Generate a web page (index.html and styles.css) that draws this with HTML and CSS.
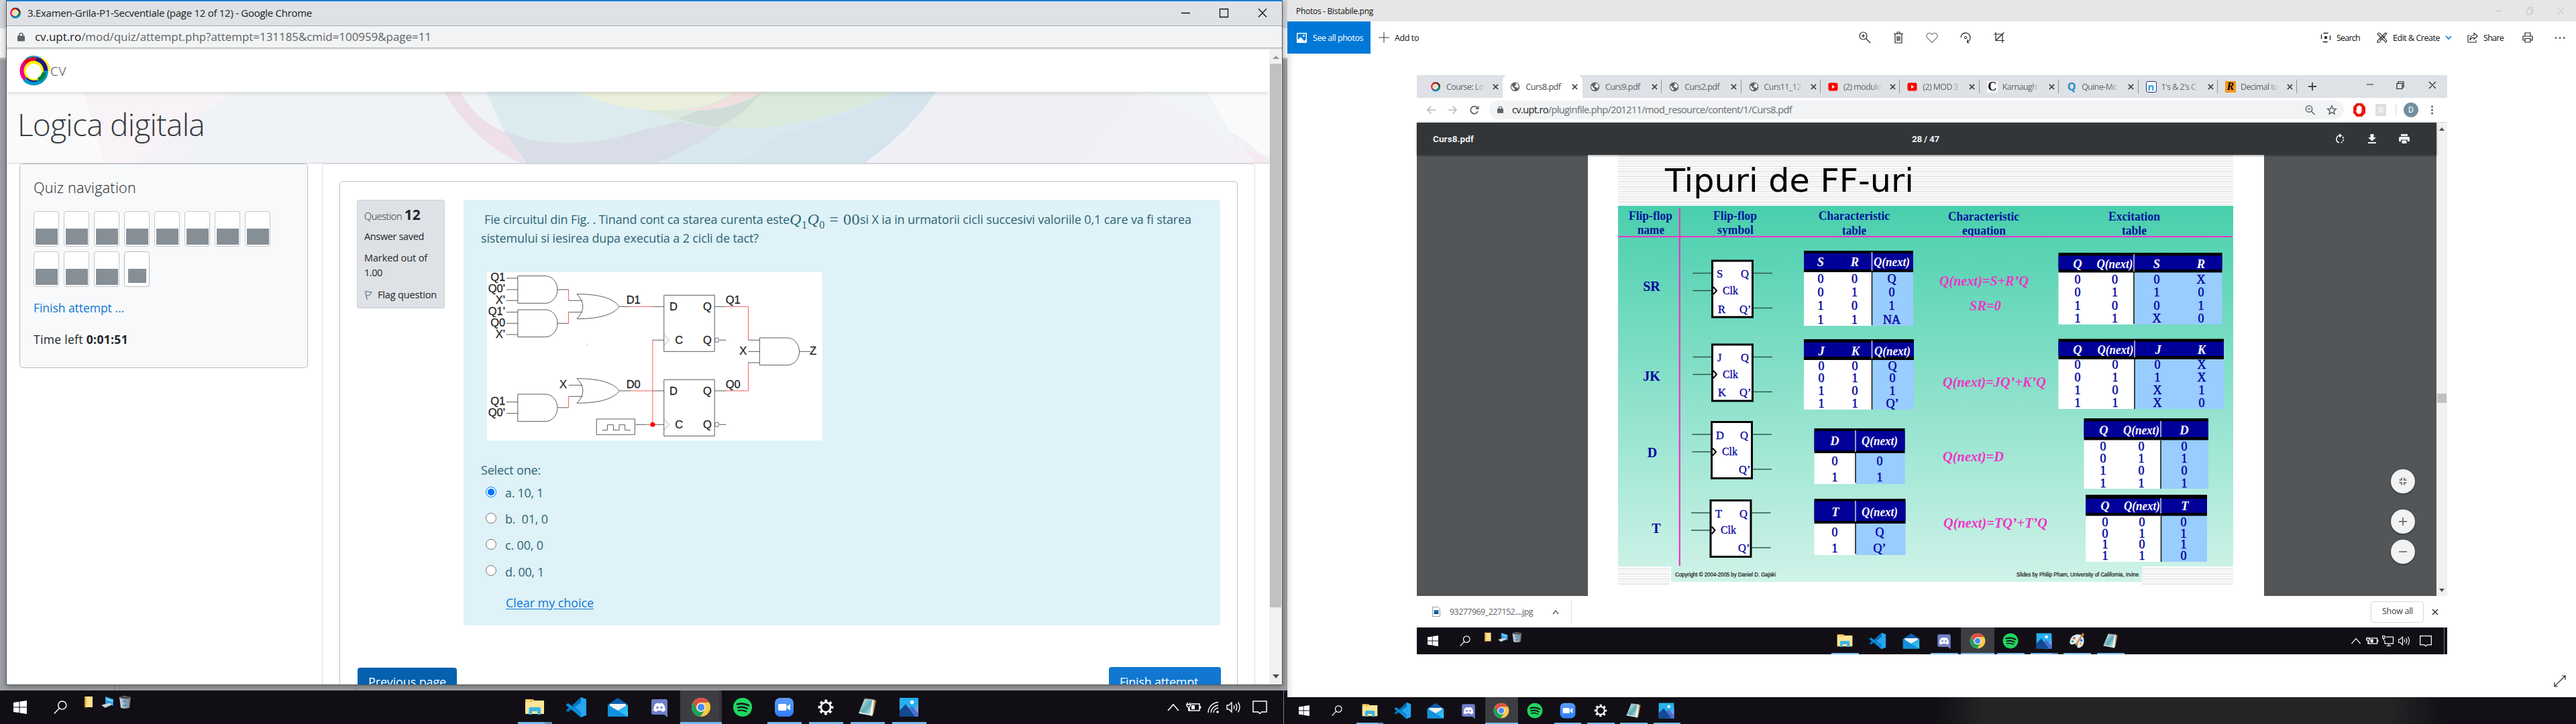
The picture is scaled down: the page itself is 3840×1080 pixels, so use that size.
FILE: index.html
```html
<!DOCTYPE html>
<html lang="en">
<head>
<meta charset="utf-8">
<title>Desktop</title>
<link rel="stylesheet" href="styles.css">
</head>
<body>
<svg class="defs" aria-hidden="true">
  <defs>
    <linearGradient id="gMail" x1="0" y1="0" x2="1" y2="1"><stop offset="0" stop-color="#1b8fe0"/><stop offset="1" stop-color="#35d0f8"/></linearGradient>
    <linearGradient id="gZoom" x1="0" y1="0" x2="0" y2="1"><stop offset="0" stop-color="#5b9df9"/><stop offset="1" stop-color="#2f7df6"/></linearGradient>
    <linearGradient id="gNote" x1="0" y1="0" x2="1" y2="1"><stop offset="0" stop-color="#e3f3f5"/><stop offset=".55" stop-color="#5fa9b5"/><stop offset="1" stop-color="#d5eef0"/></linearGradient>
    <linearGradient id="gBin" x1="0" x2="1"><stop offset="0" stop-color="#d7dadd"/><stop offset="1" stop-color="#73787d"/></linearGradient>
    <linearGradient id="gSlide" x1="0" y1="0" x2="0" y2="1"><stop offset="0" stop-color="#49cfad"/><stop offset="1" stop-color="#d0f3e9"/></linearGradient>
    <pattern id="stripes" width="20" height="7.6" patternUnits="userSpaceOnUse" y="231"><rect width="20" height="7.6" fill="#fdfdfd"/><rect y="1" width="20" height="1.6" fill="#e2e2e2"/><rect y="4.8" width="20" height="1.3" fill="#eaeaea"/></pattern>
  </defs>
  <symbol id="win" viewBox="0 0 20 20"><path fill="#fff" d="M0 3l8.500-1.200V9.500H0zM9.500 1.600 20 0v9.500H9.500zM0 10.500h8.500v7.700L0 17zM9.500 10.500H20V20l-10.500-1.600z"/></symbol>
  <symbol id="search" viewBox="0 0 20 20"><g fill="none" stroke="#fff" stroke-width="1.500"><circle cx="12.800" cy="7" r="6"/><path d="M8.500 11.500.8 19.400"/></g></symbol>
  <symbol id="minis" viewBox="0 0 70 20">
    <path fill="#ffe08a" d="M0 1h12v16H2l-2-2z"/><path fill="#d8a63f" d="M0 1h2.500v18L0 16z"/>
    <path fill="#2b9be8" d="M31 1l12 4v10l-12-4z"/><path fill="#7fd0ff" d="M32 3l10 3.300v3L32 6z"/><path fill="#c5d3dc" d="M25 14l9-3 6 2-9 5zM33 12.500l5-2 3 2-4 3z"/>
    <path fill="url(#gBin)" d="M52 2l8-2 9 2-2 16-7 1-6-1z"/><ellipse cx="60.500" cy="2.500" rx="8" ry="2" fill="#4b5055"/><path d="M57 9l3-2 2 3m0 2-2 3-3-1" fill="none" stroke="#1e8fe0" stroke-width="1.800"/>
  </symbol>
  <symbol id="explorer" viewBox="0 0 32 32"><path fill="#f6b93b" d="M2 4h12l2 3h-3l-3 2H2z"/><path fill="#ffe596" d="M2 8h9l3-2h16v20H2z"/><path fill="#fff" d="M4 5.500h5v1.400H4z"/><path fill="#3cb4e7" d="M7.500 27V18q0-2 2-2H23q2 0 2 2v9h-5v-5h-8v5z"/></symbol>
  <symbol id="vscode" viewBox="0 0 32 32"><path fill="#0072b9" d="M23 1 9 14 4 10 1 12v1l4 3.500L1 20v1l3 2 5-4 14 12z"/><path fill="#0d8ad6" d="M1 12l3-2 20 15v6h-1L1 13z"/><path fill="#27a5f2" d="M23 1l8 3v24l-8 3V9l-9.500 7 9.500 7.500z"/></symbol>
  <symbol id="mail" viewBox="0 0 32 32"><path fill="#0b5cad" d="M1 12 16 2l15 10v6H1z"/><path fill="#f2f2f4" d="M4 11h24v4L16 22 4 15z"/><path fill="url(#gMail)" d="M1 12l15 9 15-9v18H1z"/><path fill="#1390dd" d="M1 30V13l30 17z"/></symbol>
  <symbol id="discord" viewBox="0 0 32 32"><path fill="#6f7fc9" d="M7 4h18q3 0 3 3v24l-5-4H7q-3 0-3-3V7q0-3 3-3z"/><path fill="#fff" d="M9.500 11.500q2.500-2 5-2l.5 1h2l.5-1q2.500 0 5 2 2.500 5 2.500 9-2 2.200-5 2.200l-1-1.500q2-.4 2.500-1.200-6 2.400-11 0 .8.900 2.500 1.200l-1 1.500q-3 0-5-2.200 0-4 2.500-9z"/><circle cx="13" cy="16.500" r="1.700" fill="#6f7fc9"/><circle cx="19" cy="16.500" r="1.700" fill="#6f7fc9"/></symbol>
  <symbol id="chrome" viewBox="0 0 32 32"><circle cx="16" cy="16" r="14" fill="#fdca45"/><path fill="#dd4f43" d="M3.900 9A14 14 0 0 1 28.100 9H16a7 7 0 0 0-6.100 10.500z"/><path fill="#1aa260" d="M3.900 9A14 14 0 0 0 15 30l7-10.500a7 7 0 0 1-12.100 0z"/><circle cx="16" cy="16" r="6.600" fill="#f4f4f4"/><circle cx="16" cy="16" r="5.200" fill="#4a8af5"/></symbol>
  <symbol id="spotify" viewBox="0 0 32 32"><circle cx="16" cy="16" r="14" fill="#1ed760"/><g fill="none" stroke="#17181a" stroke-linecap="round"><path stroke-width="2.800" d="M8 11.500q9-2.500 17 1.800"/><path stroke-width="2.400" d="M9 16.500q7.500-2.200 14 1.500"/><path stroke-width="2" d="M9.500 21q6.500-1.700 12 1.300"/></g></symbol>
  <symbol id="zoomapp" viewBox="0 0 32 32"><rect x="2" y="2" width="28" height="28" rx="8" fill="url(#gZoom)"/><rect x="7" y="11" width="12.500" height="10" rx="2" fill="#fff"/><path fill="#fff" d="M20.500 14.500 25 11.200v9.600l-4.500-3.300z"/></symbol>
  <symbol id="gear" viewBox="0 0 32 32"><circle cx="16" cy="16" r="7.200" fill="none" stroke="#fff" stroke-width="2.600"/><circle cx="16" cy="16" r="9.700" fill="none" stroke="#fff" stroke-width="3.400" stroke-dasharray="3.800 3.820" stroke-dashoffset="1.900"/></symbol>
  <symbol id="notepad" viewBox="0 0 32 32"><path fill="#b98c4e" d="M25 4l4 2-4 20-4 4z"/><path fill="#e9f4f5" d="M12 3l14 1.500L23.500 29 3 25z"/><path fill="url(#gNote)" d="M11.500 4.500 23 6l-3.500 21L4 23z"/><path d="M11.500 3.500 26 5" stroke="#6d7476" stroke-width="2" stroke-dasharray="1.500 1"/></symbol>
  <symbol id="photos" viewBox="0 0 32 32"><path fill="#27b0ee" d="M2 2h28v28H2z"/><path fill="#7ba0ea" d="M30 10v20H20z"/><path fill="#4c6fd0" d="M15 19l5-5 10 11v5H15z"/><path fill="#134a92" d="M2 21l9-9.500L25 30H2z"/><circle cx="20.500" cy="8.500" r="2.800" fill="#fff"/></symbol>
  <symbol id="paint" viewBox="0 0 32 32"><path fill="#dcecf6" d="M17 4q12 0 12 12 0 10-9 13-5 0-3-6 1-4-4-2-8 4-10-1Q3 6 17 4z"/><circle cx="11" cy="11" r="2.300" fill="#e8503d"/><circle cx="8" cy="17" r="2.200" fill="#3ba54f"/><circle cx="24" cy="15" r="2.300" fill="#2f86dd"/><circle cx="23" cy="21" r="2.200" fill="#f3b732"/><path d="M27 3 14 24" stroke="#d58a3a" stroke-width="3"/><path d="M26 1l4 3-3 4-3-2z" fill="#b5763a"/></symbol>
  <symbol id="chev" viewBox="0 0 24 24"><path d="M4 17l8-9 8 9" fill="none" stroke="#fff" stroke-width="1.600"/></symbol>
  <symbol id="batt" viewBox="0 0 24 24"><g fill="none" stroke="#fff" stroke-width="1.500"><path d="M8 7h13v10H6v-4M22.500 10v4M3 5v3M6.500 5v3M2 8h5.500v2q-1 2-2.700 2T2 10zM4.800 12v5H7"/></g><path fill="#fff" d="M9 9h5v6H9z"/></symbol>
  <symbol id="wifi" viewBox="0 0 24 24"><g fill="none" stroke="#fff" stroke-width="1.400"><path d="M4 20A16 16 0 0 1 19 4.500M8 20A12 12 0 0 1 19 9M12 20a8 8 0 0 1 7-7"/></g><circle cx="18" cy="19" r="1.800" fill="#fff"/></symbol>
  <symbol id="net" viewBox="0 0 24 24"><g fill="none" stroke="#fff" stroke-width="1.400"><path d="M8 5h13v12H6v-6M13 17v4M9 21h8M2 3h4v4H2zM4 7v4"/></g></symbol>
  <symbol id="sound" viewBox="0 0 24 24"><g fill="none" stroke="#fff" stroke-width="1.400"><path d="M2 9h3l4-4v14l-4-4H2zM12 9.500q1.800 2.500 0 5M15 7q3.500 5 0 10M18.500 4.500q5 7.500 0 15"/></g></symbol>
  <symbol id="notif" viewBox="0 0 24 24"><path d="M2 3h20v16h-7.500L12 21.500 9.500 19H2z" fill="none" stroke="#fff" stroke-width="1.500"/></symbol>
  <symbol id="ring" viewBox="0 0 46 46"><g fill="none"><path d="M30 3q14 5 14.500 20" stroke="#fff200" stroke-width="2.500"/><circle cx="21.500" cy="23.500" r="14" stroke="#fff200" stroke-width="5"/><circle cx="21.500" cy="22.500" r="18" stroke="#ec008c" stroke-width="6"/><path d="M8 10.500A18 18 0 0 1 33 8.700" stroke="#e2001a" stroke-width="6"/><path d="M25 5A18 18 0 0 1 38.500 27" stroke="#1b1a80" stroke-width="6"/><path d="M39.500 22.500A18 18 0 0 1 8 35" stroke="#0098c9" stroke-width="6.500"/><path d="M37 25a15.500 15.500 0 0 1-9 11" stroke="#00803c" stroke-width="6"/><path d="M26 37.500a15 15 0 0 1-15-4" stroke="#1b1a80" stroke-width="2"/><path d="M10 4.500A20.500 20.500 0 0 1 32 4" stroke="#1aa6d2" stroke-width="2"/></g></symbol>
  <symbol id="lock" viewBox="0 0 12 14"><path fill="#5f6368" d="M1 5h10q1 0 1 1v7q0 1-1 1H1q-1 0-1-1V6q0-1 1-1z"/><path d="M3 5.500V4q0-3 3-3t3 3v1.500" fill="none" stroke="#5f6368" stroke-width="1.600"/></symbol>
  <symbol id="globe" viewBox="0 0 16 16"><circle cx="8" cy="8" r="7.200" fill="#5f6368"/><path fill="#fff" d="M2 6.500q2.500 0 3 2t2.500 2l-.5 3q-5-1-5-7zM8 2.500l4 .8 2 4-2 3-2.500-2H7.500V6.500L10 5z"/></symbol>
  <symbol id="yt" viewBox="0 0 16 16"><rect x=".5" y="1.500" width="15" height="13" rx="3" fill="#f00"/><path d="M6.300 5v6l4.700-3z" fill="#fff"/></symbol>
  <symbol id="x" viewBox="0 0 10 10"><path d="M1 1l8 8M9 1 1 9" fill="none" stroke="#3c4043" stroke-width="1.700"/></symbol>
  <symbol id="ff" viewBox="0 0 122 90" overflow="visible"><path d="M1.500 20.500h28M1.500 46.500h28M91 20.500h29M91 72.500h29" stroke="#2c5b4b" stroke-width="1.500"/><rect x="30.500" y="2" width="60" height="84" fill="#fff" stroke="#000" stroke-width="3"/><path d="M32 41l5 5.500-5 5.500" fill="none" stroke="#000" stroke-width="2"/></symbol>
</svg>

<div class="desk">
  <section class="screen screen-left">
    <div class="backdrop">
      <div class="window">
        <header class="titlebar">
          <svg class="fav"><use href="#ring"/></svg>
          <span class="title" data-w="424">3.Examen-Grila-P1-Secventiale (page 12 of 12) - Google Chrome</span>
          <svg class="winctl" viewBox="0 0 128 16"><path d="M0 8.500h13M57.500 2.500h12v12h-12zM115 2l12 12.500M127 2l-12 12.500" fill="none" stroke="#111" stroke-width="1.300"/></svg>
        </header>
        <div class="addressbar"><svg class="lock"><use href="#lock"/></svg><span class="url" data-w="591"><b>cv.upt.ro</b>/mod/quiz/attempt.php?attempt=131185&amp;cmid=100959&amp;page=11</span></div>
        <div class="viewport">
          <div class="page">
            <div class="brand"><svg class="logo"><use href="#ring"/></svg><span data-w="24">CV</span></div>
            <div class="banner">
              <svg class="art" viewBox="10 137 1882 106" preserveAspectRatio="none" aria-hidden="true">
                <path fill="#fafafa" d="M10 137h1882v106H10z"/><path fill="#f8f3f6" d="M125 137h220L205 243h-50z"/>
                <path fill="#eff3f6" d="M345 137h1050l-105 106H205z"/><path fill="#f3f2f6" d="M205 243 300 165 285 243z"/>
                <path fill="#dfebef" d="M725 137h430l-60 100-150 6H785L752 195z"/>
                <path fill="#eedfe8" d="M662 137h24Q710 180 752 197L782 243H775Q705 210 662 137z"/>
                <path fill="#d9dde8" d="M751 196q100 35 209-3 60-25 105-56h72q-60 70-159 106H784z"/>
                <path fill="#dcebee" d="M725 137h380Q1050 175 960 193 840 232 752 196z"/>
                <path fill="#d8e8f0" d="M1138 137h257q-40 60-105 106H978q100-40 160-106z"/>
                <path fill="#d5e4ed" d="M1160 200q90-20 180-63h55q-40 60-105 106h-185z"/>
                <path fill="#d9eadd" d="M958 162q150 70 380-25h-433z"/>
                <path fill="#cfddd8" d="M1040 165l65-28h32q-30 35-66 53-30-3-60-13z"/>
                <path fill="#f1e0df" d="M1010 165q60-5 85-28h42q-40 25-95 28z"/>
                <path fill="#ebf0dc" d="M860 137h235q-40 30-130 27-60-5-105-27z"/>
                <path fill="#efeff4" d="M1395 137h300q150 50 197 106h-600q65-46 103-106z"/><path fill="#f3f1f6" d="M1695 137 1612 243h280q-80-70-197-106z"/><path fill="#f1f5f7" d="M1695 137h105l50 90q-60-60-155-90z"/><path fill="#f6eaf0" d="M1852 220l40 15v8h-20z"/>
              </svg>
              <h1><span data-w="279">Logica digitala</span></h1>
            </div>
            <div class="columns">
              <aside class="quiznav">
                <h2><span data-w="153">Quiz navigation</span></h2>
                <div class="qgrid"><i></i><i></i><i></i><i></i><i></i><i></i><i></i><i></i><i></i><i></i><i></i><i class="current"></i></div>
                <a class="finish"><span data-w="135">Finish attempt ...</span></a>
                <p class="timer"><span data-w="141">Time left <b>0:01:51</b></span></p>
              </aside>
              <main class="region">
                <div class="attempt">
                  <div class="question">
                    <div class="info">
                      <div class="qno"><span data-w="56">Question</span> <b>12</b></div>
                      <div class="state"><span data-w="89">Answer saved</span></div>
                      <div class="grade"><span data-w="94">Marked out of</span><br><span data-w="27">1.00</span></div>
                      <div class="flag"><svg viewBox="0 0 12 14"><path d="M1.500 1l2.800 12.500M1.500 1l9.500 1.500-3.500 4.500-4.500.5" fill="none" stroke="#6a737b" stroke-width="1.200"/></svg><span data-w="88">Flag question</span></div>
                    </div>
                    <div class="formulation">
                      <p class="qtext"><span class="lead" data-w="455">Fie circuitul din Fig. . Tinand cont ca starea curenta este</span><span class="math" data-w="105"><em>Q</em><sub>1</sub><em>Q</em><sub>0</sub>&nbsp;=&nbsp;00</span><span data-w="494">si X ia in urmatorii cicli succesivi valoriile 0,1 care va fi starea</span><br><span data-w="414">sistemului si iesirea dupa executia a 2 cicli de tact?</span></p>
                      <svg class="circuit" viewBox="75 48 1452 753" preserveAspectRatio="none">
                        <path fill="#fff" d="M75 48h1452v753H75z"/>
                        <g class="wire">
                          <path d="M208 65h120a52 61 0 0 1 0 122H208zM208 216h120a52 61 0 0 1 0 122H208zM208 594h120a52 61 0 0 1 0 122H208zM1255 342h120a52 61 0 0 1 0 122h-120z"/>
                          <path d="M464 146q145 0 184 56-39 55-184 55 52-55 0-111zM464 524q145 0 184 55-39 55-184 55 52-55 0-110z"/>
                          <path d="M841 151h219v252H841zM841 529h219v252H841zM549 705h166v70H549zM573 755h23v-24h26v24h25v-24h25v24h24"/>
                          <path d="M159 75h49M159 126h49M159 175h49M159 227h49M159 277h49M159 327h49M159 629h49M159 680h49M379 126h49M379 277h49M428 175h60M428 227h60M379 654h49M428 604h60M428 554h60M648 202h49M792 202h49M648 579h49M792 579h49M792 352h49M718 730h50M792 730h49M1060 202h50M1060 579h50M1082 352h28M1082 730h28M1206 352h49M1206 403h49M1206 453h49M1427 403h49"/>
                          <path class="thin" d="M841 328l22 24-22 24M841 706l22 24-22 24"/><ellipse cx="1070" cy="352" rx="9" ry="10"/><ellipse cx="1070" cy="730" rx="9" ry="10"/>
                        </g>
                        <path class="live" d="M428 126v49M428 277v-50M428 654v-50M697 202h95M697 579h95M792 352v378h-24M1110 202h96v150M1110 579h96V453"/>
                        <circle cx="792" cy="730" r="10.500" fill="#f00"/><circle cx="509" cy="374" r="1.500" fill="#555"/>
                        <g class="pins">
                          <text x="90" y="88">Q1</text><text x="80" y="139">Q0'</text><text x="112" y="190">X'</text><text x="80" y="240">Q1'</text><text x="90" y="291">Q0</text><text x="112" y="341">X'</text>
                          <text x="90" y="643">Q1</text><text x="80" y="694">Q0'</text><text x="389" y="567">X</text><text x="678" y="189">D1</text><text x="678" y="567">D0</text><text x="1108" y="189">Q1</text><text x="1108" y="567">Q0</text>
                          <text x="865" y="219">D</text><text x="1010" y="219">Q</text><text x="889" y="370">C</text><text x="1010" y="370">Q</text><text x="865" y="597">D</text><text x="1010" y="597">Q</text><text x="889" y="748">C</text><text x="1010" y="748">Q</text><text x="1168" y="416">X</text><text x="1472" y="416">Z</text>
                        </g>
                      </svg>
                      <p class="prompt"><span data-w="89">Select one:</span></p>
                      <div class="answers">
                        <label><i class="radio on"></i><span data-w="57">a. 10, 1</span></label>
                        <label><i class="radio"></i><span data-w="64">b.&nbsp; 01, 0</span></label>
                        <label><i class="radio"></i><span data-w="57">c. 00, 0</span></label>
                        <label><i class="radio"></i><span data-w="58">d. 00, 1</span></label>
                      </div>
                      <a class="clear"><span data-w="131">Clear my choice</span></a>
                    </div>
                  </div>
                  <div class="submit"><a class="btn prev"><span data-w="116">Previous page</span></a><a class="btn next"><span data-w="135">Finish attempt ...</span></a></div>
                </div>
              </main>
            </div>
          </div>
          <div class="scrollbar"><i class="up"></i><i class="thumb"></i><i class="down"></i></div>
        </div>
      </div>
    </div>
    <footer class="taskbar tb-large">
      <span class="cell"><svg><use href="#win"/></svg></span><span class="cell"><svg><use href="#search"/></svg></span>
      <svg class="minis"><use href="#minis"/></svg>
      <div class="apps">
        <span class="app run multi"><svg><use href="#explorer"/></svg></span><span class="app"><svg><use href="#vscode"/></svg></span><span class="app"><svg><use href="#mail"/></svg></span><span class="app"><svg><use href="#discord"/></svg></span><span class="app run active"><svg><use href="#chrome"/></svg></span><span class="app"><svg><use href="#spotify"/></svg></span><span class="app run"><svg><use href="#zoomapp"/></svg></span><span class="app run"><svg><use href="#gear"/></svg></span><span class="app run"><svg><use href="#notepad"/></svg></span><span class="app run"><svg><use href="#photos"/></svg></span>
      </div>
      <div class="tray"><svg><use href="#chev"/></svg><svg><use href="#batt"/></svg><svg><use href="#wifi"/></svg><svg><use href="#sound"/></svg><svg class="bell"><use href="#notif"/></svg><i class="peek"></i></div>
    </footer>
  </section>

  <section class="screen screen-right">
    <header class="ptitle"><span data-w="115">Photos - Bistabile.png</span><svg viewBox="0 0 104 14"><path d="M1 7.500h10M48 4.500h7v8h-7zM50 4.500V2h7v8h-2M93 2l10 11M103 2 93 13" fill="none" stroke="#c3c3c3"/></svg></header>
    <nav class="pbar">
      <a class="all"><svg viewBox="0 0 15 15"><path fill="#fff" d="M0 0h15v15H0zM1.500 1.500v9L6 6l5 6 2.500-2V1.500z" fill-rule="evenodd"/><circle cx="10.500" cy="4.500" r="1.400" fill="#fff"/><path fill="#fff" d="M2 12l4-5 6 7H2z"/></svg><span data-w="75">See all photos</span></a>
      <a class="add"><svg viewBox="0 0 16 16"><path d="M8 0v16M0 8h16" stroke="#333"/></svg><span data-w="36">Add to</span></a>
      <div class="ptools">
        <svg viewBox="0 0 20 20"><g fill="none" stroke="#222" stroke-width="1.200"><circle cx="7.500" cy="7.500" r="5.500"/><path d="M11.500 11.500l6.500 6.500M5 7.500h5M7.500 5v5"/></g></svg>
        <svg viewBox="0 0 20 20"><path d="M3 4.500h14M8 4V2h4v2M5 5v13h10V5M8 8v7M10 8v7M12 8v7" fill="none" stroke="#222" stroke-width="1.200"/></svg>
        <svg viewBox="0 0 20 20"><path d="M10 17.500 3 10.500Q1 8 2.500 5.500 5 2 8.500 4L10 5.500 11.500 4q3.500-2 6 1.500Q19 8 17 10.500z" fill="none" stroke="#777" stroke-width="1.100"/></svg>
        <svg viewBox="0 0 20 20"><path d="M3 10a7 7 0 1 1 10 6.500M15.500 18 12.500 17l1-4" fill="none" stroke="#222" stroke-width="1.300"/><circle cx="10" cy="10" r="1.700" fill="none" stroke="#222"/></svg>
        <svg viewBox="0 0 20 20"><path d="M5 2v12.500h13M2 5h13v13M17.500 2.500 5 14.500" fill="none" stroke="#222" stroke-width="1.200"/></svg>
      </div>
      <div class="pright">
        <svg class="i1" viewBox="0 0 16 16"><rect x="1.500" y="1.500" width="13" height="13" rx="3" fill="none" stroke="#222" stroke-width="1.300" stroke-dasharray="7 5"/><circle cx="8" cy="8" r="2.200" fill="#222"/></svg><span data-w="35">Search</span>
        <svg class="i2" viewBox="0 0 16 16"><path d="M1 3q1-3 4-1l10 11-1.500 2zM15 2l-2-1L1 13v2.500l2.500-.5zM6 11l-2-2M10 6l2 2" fill="none" stroke="#222" stroke-width="1.100"/></svg><span data-w="70">Edit &amp; Create</span><svg class="cv" viewBox="0 0 10 8"><path d="M1 2l4 4 4-4" fill="none" stroke="#0078d7" stroke-width="1.700"/></svg>
        <svg class="i3" viewBox="0 0 16 16"><path d="M4 5H1v10h12v-3M4 12q0-7 6-7.500V1.500l5 4.500-5 4.500V8q-4 0-6 4z" fill="none" stroke="#222" stroke-width="1.100"/></svg><span data-w="30">Share</span>
        <svg class="i4" viewBox="0 0 16 16"><path d="M4 6V1h8v5M4 12H1V6h14v6h-3M4 9.500h8V15H4z" fill="none" stroke="#222" stroke-width="1.200"/></svg>
        <svg class="i5" viewBox="0 0 16 16"><path d="M1 8.500h2.200M7 8.500h2.200M13 8.500h2.200" stroke="#222" stroke-width="1.800"/></svg>
      </div>
    </nav>
    <div class="canvas">
      <div class="photo">
        <div class="tabs">
          <div class="tab"><svg><use href="#ring"/></svg><span>Course: Lo</span><svg class="tx"><use href="#x"/></svg></div>
          <div class="tab sel"><svg><use href="#globe"/></svg><span>Curs8.pdf</span><svg class="tx"><use href="#x"/></svg></div>
          <div class="tab sep whole"><svg><use href="#globe"/></svg><span>Curs9.pdf</span><svg class="tx"><use href="#x"/></svg></div>
          <div class="tab sep whole"><svg><use href="#globe"/></svg><span>Curs2.pdf</span><svg class="tx"><use href="#x"/></svg></div>
          <div class="tab sep"><svg><use href="#globe"/></svg><span>Curs11_12</span><svg class="tx"><use href="#x"/></svg></div>
          <div class="tab sep"><svg><use href="#yt"/></svg><span>(2) modulo</span><svg class="tx"><use href="#x"/></svg></div>
          <div class="tab sep"><svg><use href="#yt"/></svg><span>(2) MOD 3</span><svg class="tx"><use href="#x"/></svg></div>
          <div class="tab sep"><b class="gothic">C</b><span>Karnaugh</span><svg class="tx"><use href="#x"/></svg></div>
          <div class="tab sep"><b class="quine">Q</b><span>Quine-Mc</span><svg class="tx"><use href="#x"/></svg></div>
          <div class="tab sep"><b class="ncalc">n</b><span>1's &amp; 2's C</span><svg class="tx"><use href="#x"/></svg></div>
          <div class="tab sep"><b class="rapid">R</b><span>Decimal to</span><svg class="tx"><use href="#x"/></svg></div>
          <svg class="plus" viewBox="0 0 14 14"><path d="M7 1v12M1 7h12" stroke="#3c4043" stroke-width="1.800"/></svg>
          <svg class="ictl" viewBox="0 0 104 14"><path d="M1 6h10M46 4.500h8v8h-8zM48 4V2h8v8h-2M94 2l10 10M104 2 94 12" fill="none" stroke="#222" stroke-width="1.200"/></svg>
        </div>
        <div class="omni">
          <svg class="nav" viewBox="0 0 80 16"><path d="M13 8H1M6.500 2.500 1 8l5.500 5.500M32 8h12M38.500 2.500 44 8l-5.500 5.500" fill="none" stroke="#b8babd" stroke-width="1.600"/><path d="M75 4.500A5.500 5.500 0 1 0 76 10" fill="none" stroke="#5f6368" stroke-width="1.800"/><path fill="#5f6368" d="M77.500 1.500V7H72z"/></svg>
          <div class="field"><svg class="lock"><use href="#lock"/></svg><span data-w="417"><b>cv.upt.ro</b>/pluginfile.php/201211/mod_resource/content/1/Curs8.pdf</span>
            <svg class="fieldicons" viewBox="0 0 50 16"><g fill="none" stroke="#5f6368" stroke-width="1.500"><circle cx="7" cy="6.500" r="4.700"/><path d="M10.500 10l5 5M5 6.500h4M41 2l1.800 4.200 4.500.4-3.400 3 1 4.400L41 11.700 37.100 14l1-4.400-3.400-3 4.500-.4z"/></g></svg></div>
          <svg class="exts" viewBox="0 0 130 24"><path fill="#e8190f" d="M6 2h8l5 5.500v9L14 22H6l-5-5.500v-9z"/><path fill="#fff" d="M6 12V7h1.500V6H9V5h1.500v1H12v1h1.500v7q-1 4-4 4T5 13.500z"/><rect x="34" y="3" width="16" height="18" rx="2" fill="#ddd"/><path d="M37 8l10 8M47 8l-10 8M42 6v12" stroke="#f5f5f5" stroke-width="1.500"/><path d="M64.500 4v16" stroke="#d0d2d5"/><circle cx="87" cy="12" r="11" fill="#728f9e"/><g fill="#5f6368"><circle cx="118.500" cy="7" r="1.600"/><circle cx="118.500" cy="12" r="1.600"/><circle cx="118.500" cy="17" r="1.600"/></g><text x="87" y="16.300" class="ava">D</text></svg>
        </div>
        <div class="pdf">
          <div class="pdfmain">
            <div class="pdfbar"><span class="name" data-w="61">Curs8.pdf</span><span class="pages" data-w="41">28 / 47</span>
              <svg viewBox="0 0 112 16"><g fill="none" stroke="#f1f1f1" stroke-width="1.700"><path d="M8 3a5.500 5.500 0 0 0-1 10.800"/><path d="M9.500 13.800A5.500 5.500 0 0 0 11 4" stroke-dasharray="2.500 1.500"/></g><g fill="#f1f1f1"><path d="M7 0l4.500 3.200L7 6.400zM53.500 1h5v5h3.500l-6 5.500-6-5.500h3.500zM50 13h12v2H50zM99 1h10v3H99zM98 5h12q2 0 2 2v5h-3V9.500H99V12h-3V7q0-2 2-2zM100.500 10.500h7V15h-7z"/></g></svg>
            </div>
            <div class="sheet">
              <svg class="slide" viewBox="2367 231 1008 658">
                <path fill="url(#stripes)" d="M2412 231h917v76h-917zM2412 845h77v29h-77zM3193 846h136v28h-136z"/>
                <path fill="url(#gSlide)" d="M2412 307h917v538h-136v23h-702v-23h-79z"/>
                <text class="stitle" x="2482" y="286.400" textLength="371" lengthAdjust="spacingAndGlyphs">Tipuri de FF-uri</text>
                <g class="head">
                  <text x="2428" y="327.500" textLength="65" lengthAdjust="spacingAndGlyphs">Flip-flop</text><text x="2441" y="349" textLength="40" lengthAdjust="spacingAndGlyphs">name</text>
                  <text x="2554" y="327.500" textLength="65" lengthAdjust="spacingAndGlyphs">Flip-flop</text><text x="2560" y="349" textLength="54" lengthAdjust="spacingAndGlyphs">symbol</text>
                  <text x="2711" y="327.500" textLength="106" lengthAdjust="spacingAndGlyphs">Characteristic</text><text x="2746" y="349.500" textLength="36" lengthAdjust="spacingAndGlyphs">table</text>
                  <text x="2904" y="328.500" textLength="106" lengthAdjust="spacingAndGlyphs">Characteristic</text><text x="2925" y="349.500" textLength="65" lengthAdjust="spacingAndGlyphs">equation</text>
                  <text x="3143" y="328.500" textLength="77" lengthAdjust="spacingAndGlyphs">Excitation</text><text x="3163" y="350" textLength="37" lengthAdjust="spacingAndGlyphs">table</text>
                </g>
                <path d="M2503.800 311v533M2412 353h915" stroke="#f032c8" stroke-width="2.200"/>
                <g class="names"><text x="2462" y="434">SR</text><text x="2462" y="567.500">JK</text><text x="2463" y="682">D</text><text x="2469" y="795">T</text></g>
                <use href="#ff" x="2522" y="387" width="122" height="90"/><use href="#ff" x="2522" y="512" width="122" height="90"/><use href="#ff" x="2521" y="627.500" width="122" height="90"/><use href="#ff" x="2519.500" y="744.500" width="122" height="90"/>
                <g class="pinsff">
                  <text x="2559" y="414">S</text><text x="2595" y="414">Q</text><text x="2568" y="439" textLength="23" lengthAdjust="spacingAndGlyphs">Clk</text><text x="2561" y="466.500">R</text><text x="2593" y="466.500">Q’</text>
                  <text x="2560" y="539">J</text><text x="2595" y="539">Q</text><text x="2568" y="563.500" textLength="23" lengthAdjust="spacingAndGlyphs">Clk</text><text x="2561" y="591">K</text><text x="2593" y="591">Q’</text>
                  <text x="2558" y="655">D</text><text x="2594" y="655">Q</text><text x="2567" y="678.500" textLength="23" lengthAdjust="spacingAndGlyphs">Clk</text><text x="2592" y="706">Q’</text>
                  <text x="2557" y="772">T</text><text x="2593" y="772">Q</text><text x="2565" y="795.500" textLength="23" lengthAdjust="spacingAndGlyphs">Clk</text><text x="2591" y="823">Q’</text>
                </g>
                <g class="tbody">
                  <path d="M2689 400h101v86h-101zM2689 530h101v81h-101zM2704.500 670h61v52h-61zM2704.500 775h61v53h-61zM3068.500 400h112v84h-112zM3068.500 530h113v80h-113zM3106.500 650h114v79h-114zM3109 763h112v75h-112z" fill="#fff"/>
                  <path d="M2791 400h61v86h-61zM2791 530h62v81h-62zM2766.500 670h73v52h-73zM2766.500 775h74v53h-74zM3181.500 400h131v84h-131zM3182.500 530h132.500v80h-132.500zM3221.500 650h70.500v79h-70.500zM3222 763h68v75h-68z" fill="#9cf"/>
                  <path d="M2689 374h163v32h-163zM2689 506h164v31h-164zM2704.500 639h135v37h-135zM2704.500 744h136v37h-136zM3068.500 377h244v29.500h-244zM3068.500 505.500H3315V536h-246.500zM3106.500 624H3292v32.500h-185.500zM3109 738h181v31.500h-181z" fill="#000"/>
                  <path d="M2689 378h163v24h-163zM2689 511h164v21h-164zM2704.500 643h135v29h-135zM2704.500 748h136v29h-136zM3068.500 381.500h244v20.500h-244zM3068.500 510H3315v21h-246.500zM3106.500 628.500H3292V652h-185.500zM3109 744h181v21h-181z" fill="#000099"/>
                  <path d="M2790.500 376v28M2790.500 508v27M2766 642v32M2766 747v31M3181 379v26M3182 508v25M3221 628v24M3221 743v23" stroke="#fff" stroke-width="1.200"/>
                  <path d="M2790.500 405v80M2790.500 537v74M2766 676v44M2766 781v45M3181 406v77M3182 536v74M3221 657v72M3221.500 770v68" stroke="#111" stroke-width="1.500"/>
                </g>
                <g class="th">
                  <text x="2714 2765" y="396.500">SR</text><text x="2820" y="396.500" textLength="54" lengthAdjust="spacingAndGlyphs">Q(next)</text>
                  <text x="2715 2766" y="529.500">JK</text><text x="2821" y="529.500" textLength="54" lengthAdjust="spacingAndGlyphs">Q(next)</text>
                  <text x="2735" y="664">D</text><text x="2802" y="664" textLength="54" lengthAdjust="spacingAndGlyphs">Q(next)</text>
                  <text x="2736" y="769.500">T</text><text x="2802" y="769.500" textLength="54" lengthAdjust="spacingAndGlyphs">Q(next)</text>
                  <text x="3097 3215 3281" y="399.500">QSR</text><text x="3152.500" y="399.500" textLength="54" lengthAdjust="spacingAndGlyphs">Q(next)</text>
                  <text x="3097 3217 3282" y="527.500">QJK</text><text x="3153.500" y="527.500" textLength="54" lengthAdjust="spacingAndGlyphs">Q(next)</text>
                  <text x="3136 3256" y="647.500">QD</text><text x="3192" y="647.500" textLength="54" lengthAdjust="spacingAndGlyphs">Q(next)</text>
                  <text x="3138 3257" y="761">QT</text><text x="3193" y="761" textLength="54" lengthAdjust="spacingAndGlyphs">Q(next)</text>
                </g>
                <g class="td">
                  <text x="2714 2764.500 2820" y="422">00Q</text><text x="2714 2764.500 2820" y="442">010</text><text x="2714 2764.500 2820" y="462">101</text><text x="2714 2764.500" y="482.500">11</text><text x="2820" y="482.500">NA</text>
                  <text x="2715 2765 2821" y="551.500">00Q</text><text x="2715 2765 2821" y="570">010</text><text x="2715 2765 2821" y="589">101</text><text x="2715 2765" y="607.500">11</text><text x="2821" y="607.500">Q’</text>
                  <text x="2735 2802" y="693.500">00</text><text x="2735 2802" y="717.500">11</text><text x="2735 2802" y="799.500">0Q</text><text x="2735" y="823.500">1</text><text x="2802" y="823.500">Q’</text>
                  <text x="3097 3152.500 3215 3281" y="423">000X</text><text x="3097 3152.500 3215 3281" y="442">0110</text><text x="3097 3152.500 3215 3281" y="461.500">1001</text><text x="3097 3152.500 3215 3281" y="481">11X0</text>
                  <text x="3097 3153 3216 3282" y="550">000X</text><text x="3097 3153 3216 3282" y="569">011X</text><text x="3097 3153 3216 3282" y="588">10X1</text><text x="3097 3153 3216 3282" y="607">11X0</text>
                  <text x="3135 3192 3256" y="671.500">000</text><text x="3135 3192 3256" y="690">011</text><text x="3135 3192 3256" y="708">100</text><text x="3135 3192 3256" y="726.500">111</text>
                  <text x="3138 3193 3255" y="784.500">000</text><text x="3138 3193 3255" y="801.500">011</text><text x="3138 3193 3255" y="817.500">101</text><text x="3138 3193 3255" y="834.500">110</text>
                </g>
                <g class="eq">
                  <text x="2891" y="425.700" textLength="133" lengthAdjust="spacingAndGlyphs">Q(next)=S+R’Q</text><text x="2936" y="463" textLength="47" lengthAdjust="spacingAndGlyphs">SR=0</text><text x="2896" y="577" textLength="154" lengthAdjust="spacingAndGlyphs">Q(next)=JQ’+K’Q</text><text x="2896" y="688" textLength="91" lengthAdjust="spacingAndGlyphs">Q(next)=D</text><text x="2897" y="787" textLength="155" lengthAdjust="spacingAndGlyphs">Q(next)=TQ’+T’Q</text>
                </g>
                <g class="credit"><text x="2497" y="860.300" textLength="150" lengthAdjust="spacingAndGlyphs">Copyright © 2004-2005 by Daniel D. Gajski</text><text x="3006" y="860.300" textLength="182" lengthAdjust="spacingAndGlyphs">Slides by Philip Pham, University of California, Irvine</text></g>
              </svg>
              <div class="zoomers"><b class="fit"><svg viewBox="0 0 12 12"><path d="M4 .5V4H.5M8 .5V4h3.500M4 11.500V8H.5M8 11.500V8h3.500" fill="none" stroke="#5a5a5a" stroke-width="1.600"/></svg></b><b><svg viewBox="0 0 12 12"><path d="M6 0v12M0 6h12" stroke="#5a5a5a" stroke-width="1.500"/></svg></b><b><svg viewBox="0 0 12 12"><path d="M0 6h12" stroke="#5a5a5a" stroke-width="1.500"/></svg></b></div>
            </div>
          </div>
          <div class="scrollbar small"><i class="up"></i><i class="thumb"></i><i class="down"></i></div>
        </div>
        <div class="downloads">
          <svg class="file" viewBox="0 0 12 15"><path d="M.5.500h8l3 3v11H.5z" fill="#fff" stroke="#999"/><path fill="#1d6fc0" d="M2.500 5h7v6h-7z"/><path fill="#0b3f7a" d="M2.500 11l3-3 4 3z"/></svg>
          <span data-w="124">93277969_227152....jpg</span>
          <svg class="up" viewBox="0 0 10 8"><path d="M1 7l4-5 4 5" fill="none" stroke="#5f6368" stroke-width="1.600"/></svg><i class="line"></i>
          <a class="showall"><span data-w="46">Show all</span></a><svg class="cx"><use href="#x"/></svg>
        </div>
        <div class="taskbar tb-small tb-photo">
          <span class="cell"><svg><use href="#win"/></svg></span><span class="cell"><svg><use href="#search"/></svg></span>
          <svg class="minis"><use href="#minis"/></svg>
          <div class="apps">
            <span class="app run"><svg><use href="#explorer"/></svg></span><span class="app"><svg><use href="#vscode"/></svg></span><span class="app"><svg><use href="#mail"/></svg></span><span class="app run"><svg><use href="#discord"/></svg></span><span class="app run active"><svg><use href="#chrome"/></svg></span><span class="app run"><svg><use href="#spotify"/></svg></span><span class="app run multi"><svg><use href="#photos"/></svg></span><span class="app run"><svg><use href="#paint"/></svg></span><span class="app run"><svg><use href="#notepad"/></svg></span>
          </div>
          <div class="tray"><svg><use href="#chev"/></svg><svg><use href="#batt"/></svg><svg><use href="#net"/></svg><svg><use href="#sound"/></svg><svg class="bell"><use href="#notif"/></svg><i class="peek"></i></div>
        </div>
      </div>
      <svg class="expand" viewBox="0 0 18 18"><path d="M1 17 17 1M1 11v6h5M12 1h5v6" fill="none" stroke="#222" stroke-width="1.200"/></svg>
    </div>
    <footer class="taskbar tb-small tb-right">
      <span class="cell"><svg><use href="#win"/></svg></span><span class="cell"><svg><use href="#search"/></svg></span>
      <div class="apps">
        <span class="app run multi"><svg><use href="#explorer"/></svg></span><span class="app"><svg><use href="#vscode"/></svg></span><span class="app"><svg><use href="#mail"/></svg></span><span class="app"><svg><use href="#discord"/></svg></span><span class="app run active"><svg><use href="#chrome"/></svg></span><span class="app"><svg><use href="#spotify"/></svg></span><span class="app run"><svg><use href="#zoomapp"/></svg></span><span class="app run"><svg><use href="#gear"/></svg></span><span class="app run"><svg><use href="#notepad"/></svg></span><span class="app run"><svg><use href="#photos"/></svg></span>
      </div>
    </footer>
  </section>
</div>
<script src="fit.js"></script>
</body>
</html>
```
FILE: fit.js
```js
// Tracks each label so that it fills the width given in its data-w attribute.
document.querySelectorAll("[data-w]").forEach(function (el) {
  var target = parseFloat(el.dataset.w);
  var count = el.textContent.length;
  var width = el.getBoundingClientRect().width;
  el.style.letterSpacing = ((target - width) / count).toFixed(3) + "px";
});
```
FILE: styles.css
```css
* { box-sizing: border-box; }
body { margin: 0; width: 3840px; height: 1080px; overflow: hidden; font-family: "Open Sans", "Noto Sans", sans-serif; color: #212529; background: #fff; }
h1, h2, p { margin: 0; font-weight: 300; }
svg { display: block; flex: none; }
i { font-style: normal; }
.defs { position: absolute; width: 0; height: 0; }
[data-w] { display: inline-block; white-space: nowrap; }
.desk { display: grid; grid-template-columns: 1919px 1921px; height: 1080px; }
.screen { display: flex; flex-direction: column; height: 1080px; overflow: hidden; }

/* left monitor: quiz window */
.backdrop { height: 1030px; padding-left: 9px; background: linear-gradient(90deg, transparent 170px, #7d8083 170px, #7d8083 171px, transparent 171px, transparent 529px, #7d8083 529px, #7d8083 530px, transparent 530px), linear-gradient(#d3d6da 42px, #f4f4f4 42px, #f4f4f4 86px, #b5b7b9 86px, #b5b7b9 89px, #9c9fa3 89px); }
.window { display: flex; flex-direction: column; width: 1903px; height: 1022px; border: 1px solid #55585b; border-top: 2px solid #1b7fd0; background: #fff; box-shadow: 0 2px 8px rgba(0, 0, 0, .35); }
.titlebar { display: flex; align-items: center; height: 37px; padding: 0 22px 2px 5px; background: #dee1e6; border-bottom: 1px solid #a7abaf; }
.fav { width: 17px; height: 17px; margin-right: 9px; }
.title { font-size: 15px; color: #1c1c1c; }
.winctl { width: 128px; height: 16px; margin-left: auto; }
.addressbar { display: flex; align-items: center; height: 35px; padding: 0 0 2px 16px; background: #f1f3f4; border-bottom: 2px solid #e2e4e6; box-shadow: inset 0 -1px #a9acaf; }
.lock { width: 11px; height: 14px; margin-right: 15px; }
.url { font-size: 17px; color: #5f6368; }
.url b, .field b { font-weight: 400; color: #202124; }
.viewport { display: flex; flex: 1; min-height: 0; }
.page { flex: 1; overflow: hidden; background: #fff; }
.brand { position: relative; display: flex; align-items: center; height: 63px; padding-left: 19px; background: #fff; box-shadow: 0 2px 6px rgba(0, 0, 0, .13); font-size: 19px; font-weight: 300; color: #333; z-index: 1; }
.logo { width: 46px; height: 46px; }
.banner { position: relative; height: 107px; border-bottom: 1px solid #cfd1d4; }
.art { position: absolute; inset: 0; width: 1882px; height: 106px; }
.banner h1 { position: relative; padding: 18px 0 0 16px; font-size: 46px; line-height: 60px; color: #343a40; }
.columns { display: flex; gap: 21px; padding-left: 19px; }
.quiznav { width: 430px; height: 305px; padding: 20px; border: 1px solid #b9bcbf; border-radius: 5px; background: #f8f9fa; font-size: 17.500px; }
.quiznav h2 { margin-bottom: 20px; font-size: 21.500px; line-height: 30px; }
.qgrid { display: grid; grid-template-columns: repeat(8, 38px); grid-auto-rows: 52.500px; gap: 7.500px 7px; }
.qgrid i { border: 1px solid #c4c7ca; border-radius: 4px; background: linear-gradient(#868e96, #868e96) 50% 25px / 33px 24px no-repeat #fff; }
.qgrid .current { border-color: #b9bcbf; background-size: 27px 21px; }
.finish, .timer { display: block; line-height: 26px; }
.timer { font-weight: 400; }
.finish { margin: 18px 0 21px; color: #1177d1; }
.region { width: 1391px; height: 900px; padding: 25px; border: 1px solid #dadcdf; border-radius: 5px; }
.attempt { width: 1339px; height: 880px; padding: 27px 24px 0 25px; border: 1px solid #bdc0c3; border-radius: 5px; }
.question { display: flex; gap: 28px; }
.info { width: 131px; height: 162px; padding: 11px 0 0 10px; border: 1px solid #cad0d7; border-radius: 3px; background: #dee2e6; font-size: 14.500px; line-height: 22px; }
.qno { font-weight: 300; white-space: nowrap; margin-bottom: 8px; }
.qno b { font-size: 21px; font-weight: 700; line-height: 1; }
.state { margin-bottom: 10px; }
.grade { margin-bottom: 11px; }
.flag { display: flex; gap: 8px; }
.flag svg { width: 12px; height: 15px; margin-top: 4px; }
.formulation { width: 1128px; height: 635px; padding: 15px 0 0 26px; border-radius: 4px; background: #def2f8; color: #2f6473; font-size: 18px; line-height: 28px; }
.qtext { height: 56px; font-weight: 400; white-space: nowrap; }
.lead { margin-left: 5px; }
.math { height: 28px; vertical-align: top; font-family: "Liberation Serif", serif; font-size: 24px; }
.math sub { font-size: 16px; line-height: 0; }
.circuit { width: 500px; height: 251px; margin: 37px 0 30px 9px; }
.wire { fill: none; stroke: #444; stroke-width: 2.600; }
.wire .thin { stroke-width: 1.800; stroke: #777; }
.live { fill: none; stroke: #f44; stroke-width: 2.600; }
.pins { font-family: "Liberation Sans", Arial, sans-serif; font-size: 48px; fill: #222; stroke: #222; stroke-width: .8; }
.prompt { font-weight: 400; }
.answers { display: grid; gap: 11.200px; margin: 6px 0 18px 7px; }
.answers label { display: flex; align-items: center; gap: 13px; height: 28px; }
.radio { width: 16px; height: 16px; margin-top: -3px; border: 1px solid #767676; border-radius: 50%; background: #fff; }
.radio.on { border: 1.500px solid #0075ff; background: radial-gradient(circle, #0075ff 4.800px, #fff 5.400px); }
.clear { display: block; margin-left: 37px; color: #1177d1; }
.clear span { text-decoration: underline; text-underline-offset: 2px; }
.submit { display: flex; justify-content: space-between; padding: 62px 0 0 1px; }
.btn { height: 50px; padding: 7px 16px; border-radius: 4px; background: #1177d1; color: #fff; font-size: 18px; line-height: 28px; }
.prev { margin-top: 1px; background: #0561ad; }
.next { padding-top: 8px; }
.scrollbar { display: flex; flex-direction: column; align-items: center; width: 19px; background: #f1f1f1; }
.scrollbar .up, .scrollbar .down { width: 0; border: 5px solid transparent; }
.scrollbar .up { border-top: 0; border-bottom: 5px solid #9a9a9a; margin: 9px 0 7px; }
.scrollbar .thumb { width: 17px; height: 811px; background: #c1c1c1; }
.scrollbar .down { border-bottom: 0; border-top: 6px solid #505050; margin: auto 0 9px; }

/* taskbars */
.taskbar { position: relative; display: flex; align-items: center; background: #110f15; }
.cell { display: flex; justify-content: center; }
.apps { display: flex; height: 100%; }
.app { position: relative; display: flex; align-items: center; justify-content: center; height: 100%; }
.app.run::after { content: ""; position: absolute; left: 10%; right: 8%; bottom: 0; height: 3px; background: #76b9ed; }
.app.multi::after { background: linear-gradient(90deg, #76b9ed 79%, #5a8fb9 79%); }
.app.active { background: #3e3d42; }
.app.active::after { left: 0; right: 0; }
.tray { display: flex; align-items: center; height: 100%; margin-left: auto; }
.peek { width: 1px; height: 100%; background: #77777c; }
.tb-large { height: 50px; }
.tb-large .cell { width: 60px; }
.tb-large .cell svg { width: 20px; height: 20px; }
.tb-large .minis { width: 70px; height: 20px; margin: -14px 570px 0 6px; }
.tb-large .app { width: 62px; }
.tb-large .app svg { width: 32px; height: 32px; }
.tb-large .tray { gap: 6px; padding-right: 5px; }
.tb-large .tray svg { width: 24px; height: 24px; }
.tb-large .bell { margin-left: 9px; }
.tb-large .peek { margin-left: 17px; }
.tb-large .active { box-shadow: inset -4px 0 #35343a; }
.tb-small { height: 40px; }
.tb-small .cell { width: 49px; }
.tb-small .cell svg { width: 16px; height: 16px; }
.tb-small .app { width: 49.200px; }
.tb-small .app svg { width: 26px; height: 26px; }
.tb-small .app.run::after { height: 2px; }
.tb-right { background: linear-gradient(90deg, #110f15 965px, #242425 1040px, #242425 1640px, #131117 1725px); }
.tb-photo .cell { width: 48px; }
.tb-photo .minis { width: 56px; height: 16px; margin: -11px 456px 0 5px; }
.tb-photo .app { width: 49.500px; }
.tb-photo .tray { gap: 4px; padding-right: 4px; }
.tb-photo .tray svg { width: 20px; height: 20px; }
.tb-photo .bell { margin-left: 8px; }
.tb-photo .peek { margin-left: 13px; }

/* right monitor: photo viewer */
.screen-right { background: #fff; }
.ptitle { display: flex; justify-content: space-between; align-items: center; height: 32px; padding: 0 17px 0 13px; background: #e6e6e6; font-size: 12px; color: #111; }
.ptitle svg { width: 104px; height: 14px; }
.pbar { display: flex; align-items: center; height: 48px; font-size: 12.500px; color: #111; }
.all { display: flex; align-items: center; gap: 9px; width: 124px; height: 48px; padding-left: 14px; background: #0078d7; color: #fff; }
.all svg { width: 15px; height: 15px; }
.add { display: flex; align-items: center; gap: 8px; width: 200px; margin-left: 12px; }
.add svg { width: 16px; height: 16px; }
.ptools { display: flex; gap: 30px; margin-left: 515px; }
.ptools svg { width: 20px; height: 20px; }
.pright { display: flex; align-items: center; margin-left: auto; padding-right: 16px; }
.pright svg { width: 16px; height: 16px; }
.pright .i1 { margin-right: 8px; }
.pright .i2 { margin: 0 8px 0 25px; }
.pright .cv { width: 10px; height: 8px; margin-left: 8px; }
.pright .i3 { margin: 0 8px 0 23px; }
.pright .i4 { margin: 0 32px 0 28px; }
.canvas { position: relative; height: 960px; padding: 32px 0 0 193px; box-shadow: inset 12px 0 10px -10px rgba(0, 0, 0, .18); }
.expand { position: absolute; right: 15px; bottom: 15px; width: 18px; height: 18px; }
.photo { display: flex; flex-direction: column; width: 1536px; height: 864px; }
.tabs { display: flex; align-items: center; height: 34px; padding-left: 10px; background: #dee1e6; font-size: 12.500px; color: #5f6368; }
.tab { position: relative; display: flex; align-items: center; flex: none; width: 118.400px; height: 34px; padding-left: 11px; }
.tab > svg { width: 15px; height: 15px; margin-right: 8px; }
.tab span { width: 58px; overflow: hidden; white-space: nowrap; letter-spacing: -.6px; -webkit-mask-image: linear-gradient(90deg, #000 72%, transparent); mask-image: linear-gradient(90deg, #000 72%, transparent); }
.tab > svg.tx { width: 9px; height: 9px; margin: 0 0 0 11px; }
.tab > b { display: flex; align-items: center; justify-content: center; width: 16px; height: 17px; margin-right: 7px; line-height: 1; letter-spacing: 0; }
.tab.sep::after { content: ""; position: absolute; right: 0; top: 7px; width: 1px; height: 20px; background: #909398; }
.tab.sel { border-radius: 8px 8px 0 0; background: #fff; color: #45494d; }
.tab.sel span, .tab.whole span { letter-spacing: -.5px; -webkit-mask-image: none; mask-image: none; }
.gothic { background: #fff; color: #000; font: 900 18px "Liberation Serif", serif; }
.quine { color: #2b8cc4; font-size: 16px; }
.ncalc { border: 1.500px solid #223a66; border-radius: 3px; background: #fff; color: #2aa3ef; font-size: 15px; }
.rapid { background: #f7941d; color: #000; font: italic 700 16px "Liberation Serif", serif; }
.plus { width: 14px; height: 14px; margin-left: 16px; }
.ictl { width: 104px; height: 14px; margin: 0 0 4px 73px; }
.omni { display: flex; align-items: center; height: 37px; border-bottom: 1px solid #d8dadd; background: #fff; }
.nav { width: 80px; height: 16px; margin: 0 13px 0 15px; }
.field { display: flex; align-items: center; width: 1274px; height: 28px; padding: 0 9px 1px 12px; border-radius: 14px; background: #f1f3f4; font-size: 14.500px; color: #6a6e73; }
.field .lock { width: 9px; height: 11px; margin-right: 13px; }
.fieldicons { width: 50px; height: 16px; margin-left: auto; }
.exts { width: 130px; height: 24px; margin-left: 13px; }
.ava { font: 12px Roboto, sans-serif; fill: #fff; text-anchor: middle; }
.pdf { display: flex; height: 706px; }
.pdfmain { width: 1520px; }
.pdfbar { position: relative; display: flex; align-items: center; height: 48px; padding: 0 40px 0 24px; background: #323639; box-shadow: 0 1px 3px rgba(0, 0, 0, .45); font: 700 13.500px Roboto, sans-serif; color: #f1f1f1; z-index: 1; }
.pages { margin-left: 653px; }
.pdfbar svg { width: 112px; height: 16px; margin-left: auto; }
.sheet { position: relative; height: 658px; padding-left: 255px; background: #525659; }
.slide { width: 1008px; height: 658px; background: #fff; }
.zoomers { position: absolute; right: 32px; top: 469px; display: flex; flex-direction: column; }
.zoomers b { display: flex; align-items: center; justify-content: center; width: 36px; height: 36px; margin-bottom: 9px; border-radius: 50%; background: #f2f2f2; box-shadow: 0 1px 3px rgba(0, 0, 0, .5); }
.zoomers .fit { margin-bottom: 24px; }
.zoomers svg { width: 12px; height: 12px; }
.small { width: 16px; }
.small .up { border-width: 0 4px 5px; border-bottom-color: #505050; margin: 7px 0 0; }
.small .thumb { width: 14px; height: 14px; margin-top: 392px; }
.small .down { border-width: 5px 4px 0; margin: auto 0 6px; }
.downloads { display: flex; align-items: center; height: 47px; padding-left: 23px; background: #fff; font-size: 12.500px; color: #5f6368; }
.file { width: 12px; height: 15px; margin-right: 14px; }
.downloads .up { width: 10px; height: 8px; margin: 0 18px 0 29px; }
.line { width: 1px; height: 36px; background: #dcdee1; }
.showall { width: 79px; height: 32px; margin-left: auto; padding-left: 16px; border: 1px solid #d5d8dc; border-radius: 4px; line-height: 28px; color: #3c4043; }
.cx { width: 10px; height: 10px; margin: 0 13px 0 12px; }

/* lecture slide */
.stitle { font: 47.500px "DejaVu Sans", sans-serif; fill: #000; }
.head, .names, .td, .pinsff, .th, .eq { font-family: "Liberation Serif", "Times New Roman", serif; }
.head { font-size: 18.500px; font-weight: 700; fill: #00169a; }
.names { font-size: 20px; font-weight: 700; fill: #00009c; text-anchor: middle; }
.pinsff { font-size: 16.500px; fill: #00009c; stroke: #00009c; stroke-width: .3; }
.th { font-size: 18.500px; font-weight: 700; font-style: italic; fill: #fff; text-anchor: middle; }
.td { font-size: 18px; fill: #00009c; stroke: #00009c; stroke-width: .5; text-anchor: middle; }
.eq { font-size: 21px; font-weight: 700; font-style: italic; fill: #f032c8; }
.credit { font: 9px "Liberation Sans", Arial, sans-serif; fill: #111; stroke: #111; stroke-width: .2; }
```
